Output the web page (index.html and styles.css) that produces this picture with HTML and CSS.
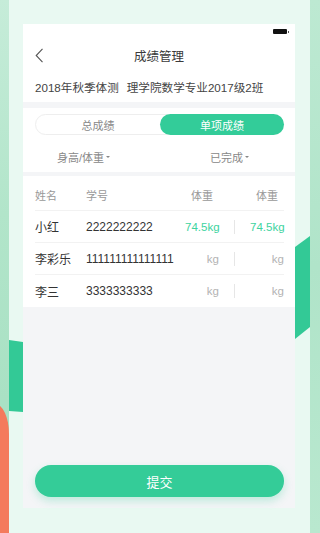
FILE: index.html
```html
<!DOCTYPE html>
<html lang="zh">
<head>
<meta charset="utf-8">
<title>成绩管理</title>
<link rel="stylesheet" href="styles.css">
</head>
<body>
<div class="stage">
  <div class="edge edge-left"><div class="orange"></div></div>
  <div class="panel">
    <div class="deco deco-left"></div>
    <div class="deco deco-right"></div>
    <div class="screen">
      <div class="status"><span class="battery"></span></div>
      <div class="nav">
        <svg class="back" width="9" height="15" viewBox="0 0 9 15"><path d="M7.5 0.8 L1.2 7.5 L7.5 14.2" fill="none" stroke="#555" stroke-width="1.1"/></svg>
        <span class="title">成绩管理</span>
      </div>
      <div class="subtitle">2018年秋季体测<span class="gap"></span>理学院数学专业2017级2班</div>

      <div class="section filters">
        <div class="tabs">
          <div class="tab">总成绩</div>
          <div class="tab active">单项成绩</div>
        </div>
        <div class="selects">
          <span class="select s1">身高/体重<i class="caret"></i></span>
          <span class="select s2">已完成<i class="caret"></i></span>
        </div>
      </div>

      <div class="section table">
        <div class="row head">
          <span>姓名</span><span>学号</span><span class="c">体重</span><span></span><span class="c">体重</span>
        </div>
        <div class="row">
          <span class="name">小红</span><span class="id">2222222222</span><span class="v green">74.5kg</span><span class="div"></span><span class="v green">74.5kg</span>
        </div>
        <div class="row">
          <span class="name">李彩乐</span><span class="id">111111111111111</span><span class="v">kg</span><span class="div"></span><span class="v">kg</span>
        </div>
        <div class="row last">
          <span class="name">李三</span><span class="id">3333333333</span><span class="v">kg</span><span class="div"></span><span class="v">kg</span>
        </div>
      </div>

      <div class="actions">
        <button class="submit">提交</button>
      </div>
    </div>
  </div>
  <div class="edge edge-right"></div>
</div>
</body>
</html>
```
FILE: styles.css
```css
html, body {
  margin: 0;
  padding: 0;
}
body {
  width: 320px;
  height: 533px;
  overflow: hidden;
  font-family: "Liberation Sans", "Noto Sans CJK SC", sans-serif;
  color: #333;
}
.stage {
  display: flex;
  width: 320px;
  height: 533px;
}
.edge {
  position: relative;
  overflow: hidden;
}
.edge-left {
  width: 9px;
  background: linear-gradient(180deg, #c6ecd9 0%, #b2e5ca 40%, #a9e1c4 75%);
}
.orange {
  position: absolute;
  left: -6px;
  top: 404px;
  width: 15px;
  height: 140px;
  background: #f47a5c;
  border-top-right-radius: 14px 30px;
}
.edge-right {
  width: 10px;
  background: linear-gradient(180deg, #bde9d2 0%, #b0e4c9 50%, #b9e8cf 100%);
}
.panel {
  position: relative;
  width: 301px;
  background: #e9f9f2;
  padding: 24px 15px 25px 14px;
  box-sizing: border-box;
}
.deco {
  position: absolute;
  background: #33c996;
}
.deco-left {
  left: 0;
  top: 340px;
  width: 14px;
  height: 72px;
  clip-path: polygon(0 0, 100% 2px, 100% 100%, 0 calc(100% - 1px));
}
.deco-right {
  right: 0;
  top: 236px;
  width: 15px;
  height: 103px;
  clip-path: polygon(0 11px, 100% 0, 100% 91px, 0 100%);
}
.screen {
  position: relative;
  width: 272px;
  height: 484px;
  background: #f4f5f7;
  display: flex;
  flex-direction: column;
}
.status {
  height: 14px;
  background: #fff;
  display: flex;
  justify-content: flex-end;
  padding: 5px 6px 0 0;
  box-sizing: border-box;
}
.battery {
  position: relative;
  width: 14px;
  height: 5px;
  background: #111;
  border-radius: 1px;
  margin-right: 2px;
}
.battery::after {
  content: "";
  position: absolute;
  right: -2px;
  top: 1.5px;
  width: 1px;
  height: 2px;
  background: #555;
}
.nav {
  height: 34px;
  background: #fff;
  display: flex;
  align-items: center;
  justify-content: center;
  position: relative;
}
.back {
  position: absolute;
  left: 12px;
  top: 10px;
}
.title {
  font-size: 12.5px;
  font-weight: 400;
  color: #3a3a3a;
}
.subtitle {
  background: #fff;
  height: 30px;
  padding: 8px 12px 0;
  box-sizing: border-box;
  font-size: 11.6px;
  line-height: 16px;
  color: #444;
  white-space: nowrap;
  margin-bottom: 6px;
}
.gap {
  display: inline-block;
  width: 8px;
}
.section {
  background: #fff;
}
.filters {
  padding: 6px 11px 7px 12px;
  margin-bottom: 4px;
}
.tabs {
  display: flex;
  height: 21px;
  border: 1px solid #eeeeee;
  border-radius: 11px;
  box-sizing: border-box;
}
.tab {
  flex: 1;
  display: flex;
  align-items: center;
  justify-content: center;
  font-size: 11px;
  color: #888;
  border-radius: 11px;
}
.tab.active {
  flex: 0 0 124px;
  background: #33cc99;
  color: #fff;
  margin: -1px -1px -1px 0;
}
.selects {
  display: flex;
  margin-top: 14px;
  height: 16px;
  align-items: center;
  font-size: 11px;
  color: #888;
}
.select {
  display: inline-flex;
  align-items: center;
}
.s1 { margin-left: 22px; }
.s2 { margin-left: 100px; }
.caret {
  display: inline-block;
  width: 0;
  height: 0;
  border-left: 2px solid transparent;
  border-right: 2px solid transparent;
  border-top: 2.5px solid #888;
  margin-left: 2px;
}
.table {
  padding: 0 11px 0 12px;
}
.row {
  display: grid;
  grid-template-columns: 51px 99px 34px 31px 34px;
  align-items: center;
  height: 32px;
  border-bottom: 1px solid #f2f2f2;
  box-sizing: border-box;
  font-size: 12px;
  color: #333;
}
.row.head {
  height: 35px;
  padding-top: 4px;
  font-size: 11px;
  color: #999;
}
.row.last {
  border-bottom: none;
}
.c {
  text-align: center;
  white-space: nowrap;
}
.name {
  font-size: 12px;
}
.id {
  font-size: 12px;
  white-space: nowrap;
  color: #333;
}
.v {
  text-align: right;
  white-space: nowrap;
  color: #b3b3b3;
  font-size: 11.5px;
}
.v.green {
  color: #3dd3a0;
}
.div {
  justify-self: center;
  width: 1px;
  height: 14px;
  background: #e6e6e6;
}
.actions {
  margin-top: auto;
  padding: 0 11px 11px 12px;
}
.submit {
  display: block;
  width: 100%;
  height: 32px;
  border: none;
  border-radius: 16px;
  background: #34cc98;
  color: #fff;
  font-family: "Liberation Sans", "Noto Sans CJK SC", sans-serif;
  font-size: 13px;
  box-shadow: 0 4px 8px rgba(52, 204, 152, 0.28);
  padding: 0;
}
```
